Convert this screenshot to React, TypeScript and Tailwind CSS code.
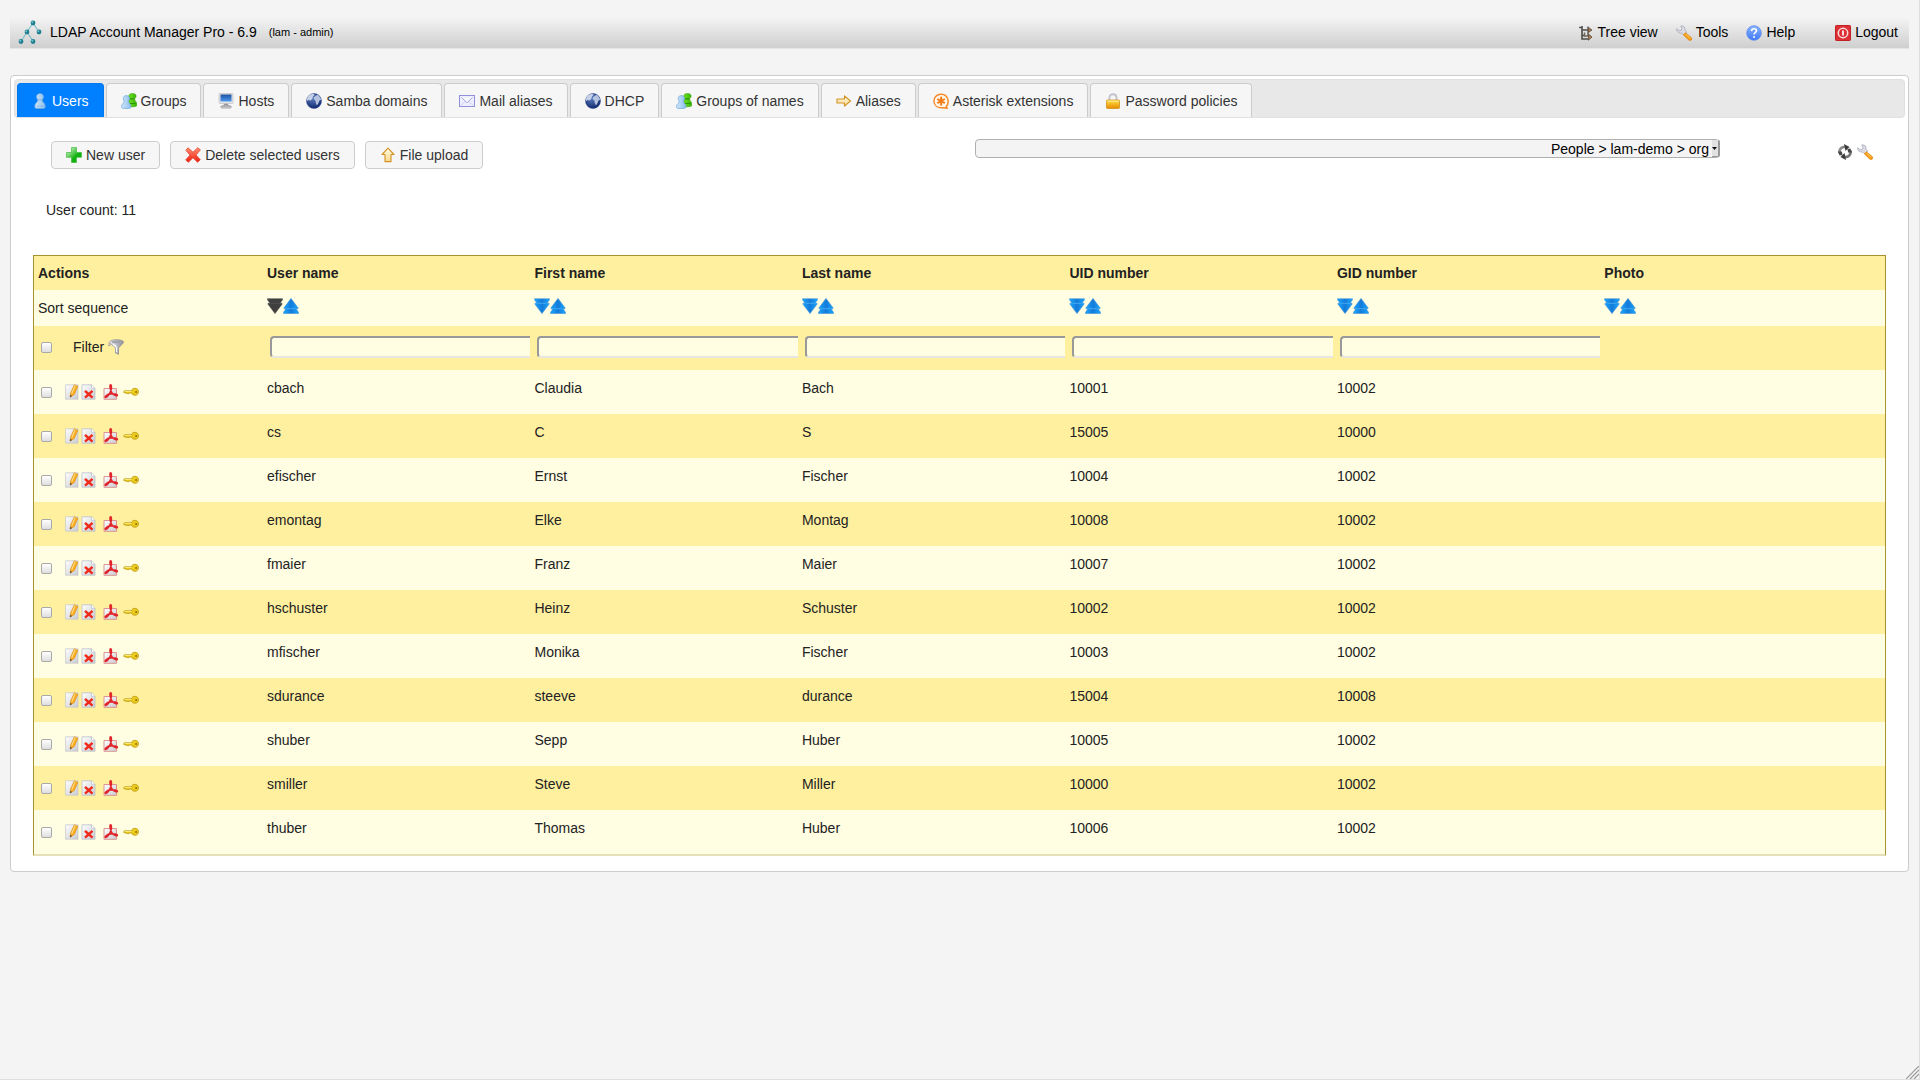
import type { ReactNode } from "react";
import { clsx } from "clsx";

function Icon({ children }: { children: ReactNode }) {
  return (
    <svg viewBox="0 0 16 16" className="h-4 w-4 shrink-0" aria-hidden="true">
      {children}
    </svg>
  );
}

// gradients shared by all icons
function IconDefs() {
  return (
    <svg className="absolute h-0 w-0" aria-hidden="true">
      <defs>
        <linearGradient id="pawnBlue" x1="0" y1="0" x2="1" y2="0">
          <stop offset="0" stopColor="#cfe6fa" />
          <stop offset="1" stopColor="#8dbfec" />
        </linearGradient>
        <linearGradient id="pawnGreen" x1="0" y1="0" x2="1" y2="0">
          <stop offset="0" stopColor="#6fe02a" />
          <stop offset="1" stopColor="#36b300" />
        </linearGradient>
        <radialGradient id="globe" cx="0.4" cy="0.3" r="0.7">
          <stop offset="0" stopColor="#5f7fc4" />
          <stop offset="1" stopColor="#122a6e" />
        </radialGradient>
        <linearGradient id="screen" x1="0" y1="0" x2="0" y2="1">
          <stop offset="0" stopColor="#1c4f9f" />
          <stop offset="1" stopColor="#4b9af0" />
        </linearGradient>
        <linearGradient id="gold" x1="0" y1="0" x2="0" y2="1">
          <stop offset="0" stopColor="#ffe14a" />
          <stop offset="1" stopColor="#e88a00" />
        </linearGradient>
        <linearGradient id="cream" x1="0" y1="0" x2="0" y2="1">
          <stop offset="0" stopColor="#fffbe6" />
          <stop offset="1" stopColor="#fbd98a" />
        </linearGradient>
        <linearGradient id="plus" x1="0" y1="0" x2="1" y2="1">
          <stop offset="0.2" stopColor="#a5e89c" />
          <stop offset="0.6" stopColor="#12b112" />
        </linearGradient>
        <linearGradient id="cross" x1="0" y1="0" x2="0" y2="1">
          <stop offset="0" stopColor="#ff9072" />
          <stop offset="1" stopColor="#ee1c0c" />
        </linearGradient>
        <linearGradient id="arrowBlue" x1="0" y1="0" x2="1" y2="0">
          <stop offset="0" stopColor="#18a8ff" />
          <stop offset="0.5" stopColor="#147ad8" />
          <stop offset="1" stopColor="#18a8ff" />
        </linearGradient>
        <linearGradient id="sheet" x1="0" y1="0" x2="1" y2="1">
          <stop offset="0" stopColor="#ffffff" />
          <stop offset="1" stopColor="#c9cbd2" />
        </linearGradient>
        <linearGradient id="steel" x1="0" y1="0" x2="1" y2="0">
          <stop offset="0" stopColor="#f4f4f8" />
          <stop offset="1" stopColor="#8b8b96" />
        </linearGradient>
        <linearGradient id="help" x1="0" y1="0" x2="0" y2="1">
          <stop offset="0" stopColor="#8ab4ff" />
          <stop offset="1" stopColor="#3f78f2" />
        </linearGradient>
      </defs>
    </svg>
  );
}

function UserIcon() {
  return (
    <Icon>
      <path
        d="M8 .6c2.200 0 3.500 1.500 3.500 3.300 0 1.300-.6 2-1.200 2.700 0 1.600.5 2.400 1.600 3.400 1 1 1.400 2.400 1.200 4.400-.1.800-1.600 1.200-5.100 1.200s-5-.4-5.100-1.200c-.2-2 .2-3.400 1.200-4.400 1.100-1 1.600-1.800 1.600-3.400-.6-.7-1.200-1.400-1.200-2.700C4.500 2.100 5.800.6 8 .6z"
        fill="url(#pawnBlue)"
        stroke="#6aa6dc"
        strokeWidth="0.7"
      />
      <path d="M5.500 6.800h5M4.800 13.200h6.400" stroke="#5f9ad2" strokeWidth="0.8" opacity="0.6" />
    </Icon>
  );
}

function GroupIcon() {
  return (
    <Icon>
      <path
        d="M11.500.5c2.300 0 3.700 1 3.600 2.600 0 1.400-1 2.100-1.500 2.700 0 1.200.4 1.800 1.200 2.700.9 1 1.200 2.500 1 4.300-1.800 1.300-6.500 1.200-7.800.3V5.200C7.600 4.500 7.800 3.900 7.800 3 7.800 1.500 9.200.5 11.500.5z"
        fill="url(#pawnGreen)"
        stroke="#3ea312"
        strokeWidth="0.6"
      />
      <path d="M9 5.800h4.500M9 10.500h5.500" stroke="#1f7d00" strokeWidth="1.2" opacity="0.7" />
      <path
        d="M5.400 2.600c1.900 0 3.100 1.200 3.100 2.900 0 1.200-.7 1.900-1.200 2.500 0 1.300.5 1.900 1.500 2.800.9.8 1.200 2 1 3.600-.1.800-1.300 1.100-4.600 1.100S.7 15.200.6 14.400c-.2-1.600.2-2.800 1.100-3.600 1-.9 1.500-1.500 1.500-2.800-.5-.6-1-1.300-1-2.500 0-1.700 1.300-2.900 3.200-2.900z"
        fill="url(#pawnBlue)"
        stroke="#6aa6dc"
        strokeWidth="0.7"
      />
    </Icon>
  );
}

function HostIcon() {
  return (
    <Icon>
      <rect x="1" y="0.5" width="14" height="10" rx="0.8" fill="#e4e4e6" stroke="#b9b9be" strokeWidth="0.6" />
      <rect x="2.5" y="1.5" width="11" height="7" fill="url(#screen)" />
      <path d="M6 10.800h4l.5 1.700h-5z" fill="#9a9aa2" />
      <path d="M4 12.700h8l1.500 1.200h-11zM3 15h10" fill="#d8d8dc" stroke="#8d8d94" strokeWidth="0.7" />
    </Icon>
  );
}

function GlobeIcon() {
  return (
    <Icon>
      <circle cx="8" cy="8" r="7.5" fill="url(#globe)" stroke="#27418c" strokeWidth="0.5" />
      <path d="M2 3.600C3.300 1.800 5.500.8 7.400.8L8.600 2 7 3.500 6.200 6 4.500 7.600 2.500 7 1 8.200C.8 6.500 1.200 4.800 2 3.600z" fill="#d4dcec" opacity="0.9" />
      <path d="M9.200 3.200l2.300-1.400c1.800 1 3.200 3 3.600 5.200l-1.600.6-1.100 2.600-1.500 2.200-1.200-2.600-.3-2.300-1.700-1.200.3-2z" fill="#c3cee6" opacity="0.9" />
    </Icon>
  );
}

function MailIcon() {
  return (
    <Icon>
      <rect x="0.5" y="2.5" width="15" height="11" fill="#eeeefc" stroke="#9090dc" />
      <path d="M2.500 4.500L8 9.800l5.500-5.300" fill="#f8f8ff" stroke="#a6a6e2" strokeWidth="1" />
      <path d="M2 12.200l4-3.600M14 12.200l-4-3.600" stroke="#c6c6f0" strokeWidth="0.8" />
    </Icon>
  );
}

function ArrowRightIcon() {
  return (
    <Icon>
      <path d="M1 6h7.500V2.800L14.500 8l-6 5.200V10H1z" fill="url(#cream)" stroke="#d39126" strokeWidth="1.1" strokeLinejoin="round" />
    </Icon>
  );
}

function ArrowUpIcon() {
  return (
    <Icon>
      <path d="M5 14.600V7.500H2L8 1.200l6 6.300h-3v7.100z" fill="url(#cream)" stroke="#d39126" strokeWidth="1.1" strokeLinejoin="round" />
    </Icon>
  );
}

function AsteriskIcon() {
  return (
    <Icon>
      <path d="M13.200 13.600C15 12 15.500 9.800 14.900 6.600 14 2.800 10.800.9 7.400 1.200 3.500 1.600.8 4.800 1 8.500c.3 4 3.500 6.500 7.500 6.300l5.500.3z" fill="#fff6ec" stroke="#f58a2a" strokeWidth="1.5" />
      <path d="M8.100 3.800v8.600M4.300 6l7.500 4.200M4.300 10.200L11.800 6" stroke="#f57c14" strokeWidth="2" />
    </Icon>
  );
}

function LockIcon() {
  return (
    <Icon>
      <path d="M4.500 8V4.500C4.500 2.300 6 1.200 8 1.200s3.500 1.100 3.500 3.300V8" fill="none" stroke="#c4c4ce" strokeWidth="2" />
      <rect x="1.500" y="7" width="13" height="8.5" rx="0.8" fill="url(#gold)" stroke="#cf8b10" strokeWidth="0.7" />
      <path d="M2.500 8.200h11" stroke="#fff3a0" strokeWidth="0.9" />
    </Icon>
  );
}

function PlusIcon() {
  return (
    <Icon>
      <path d="M5.500.5h5v5h5v4.800h-5v5.200h-5v-5.200h-5V5.500h5z" fill="url(#plus)" stroke="#2fb22f" strokeWidth="0.6" />
    </Icon>
  );
}

function CrossIcon() {
  return (
    <Icon>
      <path
        d="M3 .8l5 4.400 4.600-4.400 2.800 2L11 8l4.300 4.700-2.700 2.600L8 10.800l-4.700 4.500L.7 12.900 5 8 .8 3.300z"
        fill="url(#cross)"
        stroke="#e03522"
        strokeWidth="0.7"
      />
    </Icon>
  );
}

function TreeIcon() {
  return (
    <Icon>
      <path d="M4 1v13h6M1.200 2.500H4M4 5h7M4 10.500h3" fill="none" stroke="#4c4c49" strokeWidth="1.6" />
      <path d="M10 1.500v9M6.500 7.500v3.500H11" fill="none" stroke="#6b665e" strokeWidth="1.5" />
      <path d="M10.500 2.500l3.500 2.500-3.500 2.500zM10.500 9l3.500 3-3.500 3.200z" fill="#a9805c" stroke="#5d4a38" strokeWidth="0.8" />
    </Icon>
  );
}

function WrenchIcon() {
  return (
    <Icon>
      <path
        d="M4.800.9C7.500.4 9.500 2.500 9 5.200l1.800 1.900-3 3-2-2C3 8.500.3 6.600.6 3.700l2.600 2.100 2.200-.6.5-1.900z"
        fill="#dcdce6"
        stroke="#a2a2b0"
        strokeWidth="0.7"
      />
      <path d="M9.300 7.700l5.800 4.700c1 .9.800 2.500-.3 2.900-.9.400-1.700.1-2.300-.5L7.400 9.900z" fill="#fb9e14" stroke="#d67c08" strokeWidth="0.7" />
      <path d="M9.600 9.100l4.300 3.800" stroke="#ffd375" strokeWidth="0.9" />
    </Icon>
  );
}

function HelpIcon() {
  return (
    <Icon>
      <circle cx="8" cy="8" r="7.3" fill="url(#help)" stroke="#5e8df0" strokeWidth="0.8" />
      <path d="M5.500 6.100C5.600 4.500 6.600 3.700 8 3.700c1.500 0 2.500.9 2.500 2.100 0 1.900-2.500 1.900-2.500 3.800" fill="none" stroke="#fff" strokeWidth="1.6" />
      <circle cx="8" cy="11.9" r="1" fill="#fff" />
    </Icon>
  );
}

function LogoutIcon() {
  return (
    <Icon>
      <rect x="0.5" y="0.5" width="15" height="15" rx="0.8" fill="#dc3034" stroke="#c01f24" />
      <circle cx="8" cy="8" r="4.7" fill="none" stroke="#fbdcdc" strokeWidth="1.5" />
      <path d="M8 5.500v5" stroke="#fff" strokeWidth="1.7" />
    </Icon>
  );
}

function RefreshIcon() {
  return (
    <Icon>
      <path d="M2.500 9C2 5 4.500 2.800 8 2.800" fill="none" stroke="#8c8c8c" strokeWidth="2.8" />
      <path d="M7 0l5.500 2.900L8.500 7z" fill="#3d3d3d" />
      <path d="M13.500 7c.5 4-2 6.200-5.500 6.200" fill="none" stroke="#777" strokeWidth="2.8" />
      <path d="M9 16l-5.500-2.900L7.500 9z" fill="#3d3d3d" />
      <path d="M.8 7.500h4l.8 3.500-3 .5zM15.200 8.500h-4l-.8-3.500 3-.5z" fill="#4a4a4a" />
    </Icon>
  );
}

function FunnelIcon() {
  return (
    <Icon>
      <path d="M1.500 3.500C1.500 2 4 .8 8.500.8s7 1.100 7 2.500c0 1-4.800 5-5 6v6l-3-1.300V9.300C7.300 8 4 6 2.500 4.500z" fill="url(#steel)" stroke="#8c8c94" strokeWidth="0.8" />
      <ellipse cx="8.6" cy="3" rx="5.2" ry="1.3" fill="#a4a4ae" />
      <path d="M1.200 3.500L.8 7l2.400-1.500" fill="none" stroke="#a3a3ab" />
      <path d="M7 6l1.500 3v4M5 5l2 2" fill="none" stroke="#fff" strokeWidth="1.2" />
    </Icon>
  );
}

function EditIcon() {
  return (
    <Icon>
      <path d="M.6.800h12.400v14.400H.6z" fill="url(#sheet)" stroke="#c2c4ca" strokeWidth="0.7" />
      <path d="M5 13.200l.6-4.200L9.300.8l3.600 1.500L9.300 10.600z" fill="#f9ac22" stroke="#d98a12" strokeWidth="0.6" />
      <path d="M6.800 9.500L10.200 1.600" stroke="#ffdb80" strokeWidth="1.2" />
      <path d="M5 13.300l.4-2.300 1.800.9z" fill="#444" />
    </Icon>
  );
}

function DeleteIcon() {
  return (
    <Icon>
      <path d="M1 .8h9.500l3.500 3.400v11H1z" fill="url(#sheet)" stroke="#b3b9c8" strokeWidth="0.7" />
      <path d="M10.500.8v3.400H14" fill="#fff" stroke="#b3b9c8" strokeWidth="0.7" />
      <path d="M4 6.800l7.500 6.900M11.500 6.800L4 13.700" stroke="#ee2a1c" strokeWidth="2.5" />
    </Icon>
  );
}

function PdfIcon() {
  return (
    <Icon>
      <path d="M1 4.500h12.500v10.800H1z" fill="url(#sheet)" stroke="#d98a8a" strokeWidth="0.9" />
      <path
        d="M7.500.9c1.300 0 1 2.600.6 4.600C7.400 8.800 5 13 2.800 13.400c-1.800.2.2-2.900 4.700-3.500 3.500-.5 6.900.2 6.900 1.300 0 1.200-3.400.3-5.200-2C7.800 7.600 6.200 1 7.500.9z"
        fill="none"
        stroke="#e0242a"
        strokeWidth="1.6"
      />
    </Icon>
  );
}

function KeyIcon() {
  return (
    <Icon>
      <path
        d="M8.300 6.800C8.800 5.300 10.300 4.200 12 4.300c2 0 3.500 1.500 3.500 3.500s-1.500 3.500-3.500 3.500c-1.700 0-3-1-3.600-2.400H6.800l-.9 1-1-.9-1 .9-.9-1H1.300L.6 8l.8-1.200z"
        fill="#ecc91c"
        stroke="#b1920c"
        strokeWidth="0.7"
      />
      <path d="M1.500 7.500h7" stroke="#fdf08c" strokeWidth="0.8" />
      <circle cx="13.2" cy="7.9" r="1" fill="#8f7508" />
    </Icon>
  );
}

function SortDownIcon({ active }: { active?: boolean }) {
  return (
    <Icon>
      <path
        d="M.5.8h15v.9L13 5.200h2v1L8 15.600 1 6.200v-1h2L.5 1.700z"
        fill={active ? "#3f3f3f" : "url(#arrowBlue)"}
        stroke={active ? "#4c4c4c" : "#3f8fd6"}
        strokeWidth="0.6"
      />
      <path d="M3.500 5.300h9" stroke={active ? "#5a5a5a" : "#56b8f6"} strokeWidth="0.7" />
    </Icon>
  );
}

function SortUpIcon() {
  return (
    <Icon>
      <path d="M8 .4L15 9.800v1h-2l2.500 3.500v1.200H.5v-1.200L3 10.800H1v-1z" fill="url(#arrowBlue)" stroke="#3f8fd6" strokeWidth="0.6" />
      <path d="M3.500 10.700h9" stroke="#56b8f6" strokeWidth="0.7" />
    </Icon>
  );
}

function Logo() {
  return (
    <svg viewBox="0 0 24 24" className="h-6 w-6 shrink-0" aria-hidden="true">
      <path d="M15 3L9 12 3 21.500M15 3l6 9M9 12l6 9" fill="none" stroke="#7fc0cc" strokeWidth="1.2" />
      {[
        [15, 3],
        [9, 12],
        [21, 12],
        [3, 21.5],
        [15, 21.5],
      ].map(([cx, cy]) => (
        <g key={`${cx}-${cy}`}>
          <circle cx={cx} cy={cy} r="2.4" fill="#1f7f90" />
          <circle cx={cx - 0.7} cy={cy - 0.7} r="1" fill="#6fc3d0" />
        </g>
      ))}
    </svg>
  );
}

const tabs = [
  { label: "Users", icon: <UserIcon />, active: true },
  { label: "Groups", icon: <GroupIcon /> },
  { label: "Hosts", icon: <HostIcon /> },
  { label: "Samba domains", icon: <GlobeIcon /> },
  { label: "Mail aliases", icon: <MailIcon /> },
  { label: "DHCP", icon: <GlobeIcon /> },
  { label: "Groups of names", icon: <GroupIcon /> },
  { label: "Aliases", icon: <ArrowRightIcon /> },
  { label: "Asterisk extensions", icon: <AsteriskIcon /> },
  { label: "Password policies", icon: <LockIcon /> },
];

const columns = ["User name", "First name", "Last name", "UID number", "GID number", "Photo"];

const users = [
  ["cbach", "Claudia", "Bach", "10001", "10002"],
  ["cs", "C", "S", "15005", "10000"],
  ["efischer", "Ernst", "Fischer", "10004", "10002"],
  ["emontag", "Elke", "Montag", "10008", "10002"],
  ["fmaier", "Franz", "Maier", "10007", "10002"],
  ["hschuster", "Heinz", "Schuster", "10002", "10002"],
  ["mfischer", "Monika", "Fischer", "10003", "10002"],
  ["sdurance", "steeve", "durance", "15004", "10008"],
  ["shuber", "Sepp", "Huber", "10005", "10002"],
  ["smiller", "Steve", "Miller", "10000", "10002"],
  ["thuber", "Thomas", "Huber", "10006", "10002"],
];

function Checkbox({ label }: { label: string }) {
  return (
    <input
      type="checkbox"
      aria-label={label}
      className="h-[11px] w-[11px] shrink-0 appearance-none rounded-xs border border-[#a9a9a9] bg-linear-to-b from-white to-[#dedede] checked:bg-gray-500"
    />
  );
}

function HeaderLink({ icon, label }: { icon: ReactNode; label: string }) {
  return (
    <a href="#" className="flex items-center gap-1">
      <span className="mt-0.5">{icon}</span>
      {label}
    </a>
  );
}

function ToolbarButton({ icon, label }: { icon: ReactNode; label: string }) {
  return (
    <button
      type="button"
      className="flex h-7 items-center gap-1 rounded-sm border border-[#cccccc] bg-[#f6f6f6] px-3.5 text-[#333333]"
    >
      {icon}
      {label}
    </button>
  );
}

function TopBar() {
  return (
    <header className="flex h-8 items-center justify-between border-b border-[#e4e4e4] bg-linear-to-b from-[#f4f4f4] to-[#cfcfcf] px-2 pb-0.5 text-black">
      <div className="flex items-center">
        <Logo />
        <span className="ml-2">LDAP Account Manager Pro - 6.9</span>
        <span className="ml-3 text-[11px]">(lam - admin)</span>
      </div>
      <nav className="flex items-center gap-[18px] pr-[3px]">
        <HeaderLink icon={<TreeIcon />} label="Tree view" />
        <HeaderLink icon={<WrenchIcon />} label="Tools" />
        <HeaderLink icon={<HelpIcon />} label="Help" />
        <span className="ml-[22px]">
          <HeaderLink icon={<LogoutIcon />} label="Logout" />
        </span>
      </nav>
    </header>
  );
}

function TabBar() {
  return (
    <nav className="flex gap-0.5 rounded-sm border border-[#e0e0e0] bg-[#e8e8e8] px-0.5 pt-[3px]">
      {tabs.map((tab) => (
        <a
          key={tab.label}
          href="#"
          className={clsx(
            "flex h-[34px] items-center gap-1 rounded-t-sm border border-b-0 px-3.5",
            tab.active ? "border-[#0078f0] bg-[#007fff] text-white" : "border-[#cccccc] bg-[#f6f6f6] text-[#333333]"
          )}
        >
          {tab.icon}
          {tab.label}
        </a>
      ))}
    </nav>
  );
}

function Toolbar() {
  return (
    <div className="flex items-start pr-[13px] pl-[18px]">
      <div className="flex w-[50.7%] gap-2.5 pt-0.5">
        <ToolbarButton icon={<PlusIcon />} label="New user" />
        <ToolbarButton icon={<CrossIcon />} label="Delete selected users" />
        <ToolbarButton icon={<ArrowUpIcon />} label="File upload" />
      </div>
      <div className="relative flex w-[40.9%]">
        <select
          aria-label="Suffix"
          className="h-[19px] w-full appearance-none rounded-sm border border-[#b0b0b0] bg-[#f4f4f4] pr-2.5 text-right leading-4 text-black [text-align-last:right]"
        >
          <option>People &gt; lam-demo &gt; org</option>
        </select>
        <span className="pointer-events-none absolute inset-y-px right-0 flex w-2 items-center justify-center rounded-r-xs border-r-2 border-b border-[#999999] bg-[#e2e2e2]">
          <svg viewBox="0 0 5 3" className="h-[3px] w-[5px]" aria-hidden="true">
            <path d="M0 0h5L2.500 3z" fill="#111" />
          </svg>
        </span>
      </div>
      <div className="ml-auto flex gap-1 pt-[5px]">
        <button type="button" aria-label="Refresh">
          <RefreshIcon />
        </button>
        <button type="button" aria-label="Change settings">
          <WrenchIcon />
        </button>
      </div>
    </div>
  );
}

function UserTable() {
  return (
    <div className="border border-b-2 border-[#a6932f] border-b-[#e6e0b8]">
      <table className="w-full table-fixed border-collapse text-left text-[#222222]">
        <colgroup>
          <col className="w-[229px]" />
          {columns.slice(0, -1).map((column) => (
            <col key={column} className="w-[14.45%]" />
          ))}
          <col />
        </colgroup>
        <thead>
          <tr className="h-[34px] bg-[#fff0a0]">
            <th className="px-1">Actions</th>
            {columns.map((column) => (
              <th key={column} className="px-1">
                {column}
              </th>
            ))}
          </tr>
        </thead>
        <tbody>
          <tr className="h-9 bg-[#fffde2]">
            <td className="px-1">Sort sequence</td>
            {columns.map((column, i) => (
              <td key={column} className="px-1 pb-1">
                <div className="flex">
                  <button type="button" aria-label={`Sort ${column} descending`}>
                    <SortDownIcon active={i === 0} />
                  </button>
                  <button type="button" aria-label={`Sort ${column} ascending`}>
                    <SortUpIcon />
                  </button>
                </div>
              </td>
            ))}
          </tr>
          <tr className="h-11 bg-[#fff0a0]">
            <td className="pb-0.5 pl-[7px]">
              <div className="flex items-center">
                <Checkbox label="Select all users" />
                <button type="button" className="ml-[21px] flex items-center gap-1">
                  Filter
                  <FunnelIcon />
                </button>
              </div>
            </td>
            {columns.map((column) => (
              <td key={column} className="pb-0.5 pl-[7px]">
                {column !== "Photo" && (
                  <input
                    type="text"
                    aria-label={`Filter ${column}`}
                    className="block h-[22px] w-full rounded-l-sm border-2 border-r-0 border-[#999999] border-b-[#e8e6e0] bg-[#fffde2] px-1"
                  />
                )}
              </td>
            ))}
          </tr>
          {users.map((user) => (
            <tr key={user[0]} className="h-11 odd:bg-[#fffde2] even:bg-[#fff0a0]">
              <td className="pl-[7px]">
                <div className="flex items-center">
                  <Checkbox label={`Select ${user[0]}`} />
                  <span className="ml-[13px] flex">
                    <button type="button" aria-label="Edit">
                      <EditIcon />
                    </button>
                    <button type="button" aria-label="Delete">
                      <DeleteIcon />
                    </button>
                  </span>
                  <span className="ml-1.5 flex gap-1">
                    <button type="button" aria-label="Create PDF">
                      <PdfIcon />
                    </button>
                    <button type="button" aria-label="Change password">
                      <KeyIcon />
                    </button>
                  </span>
                </div>
              </td>
              {user.map((value, i) => (
                <td key={i} className="px-1 pb-2">
                  {value}
                </td>
              ))}
              <td />
            </tr>
          ))}
        </tbody>
      </table>
    </div>
  );
}

export default function App() {
  return (
    <div className="relative min-h-screen border-r border-b border-[#dedede] bg-[#f4f4f4] px-2.5 pt-[17px] font-['Liberation_Sans',Arial,sans-serif] text-[14px] leading-5">
      <IconDefs />
      <TopBar />
      <main className="mt-[26px] rounded-sm border border-[#cccccc] bg-white p-[3px] pb-[15px]">
        <TabBar />
        <section className="px-[19px] pt-[21px]">
          <Toolbar />
          <p className="mt-[31px] pl-[13px] text-[#222222]">User count: 11</p>
          <div className="mt-[35px]">
            <UserTable />
          </div>
        </section>
      </main>
      <svg viewBox="0 0 13 13" className="absolute right-0 bottom-0 h-[13px] w-[13px]" aria-hidden="true">
        <path d="M0 13L13 0M4 13l9-9M8 13l5-5" stroke="#999" strokeWidth="1.2" />
      </svg>
    </div>
  );
}
